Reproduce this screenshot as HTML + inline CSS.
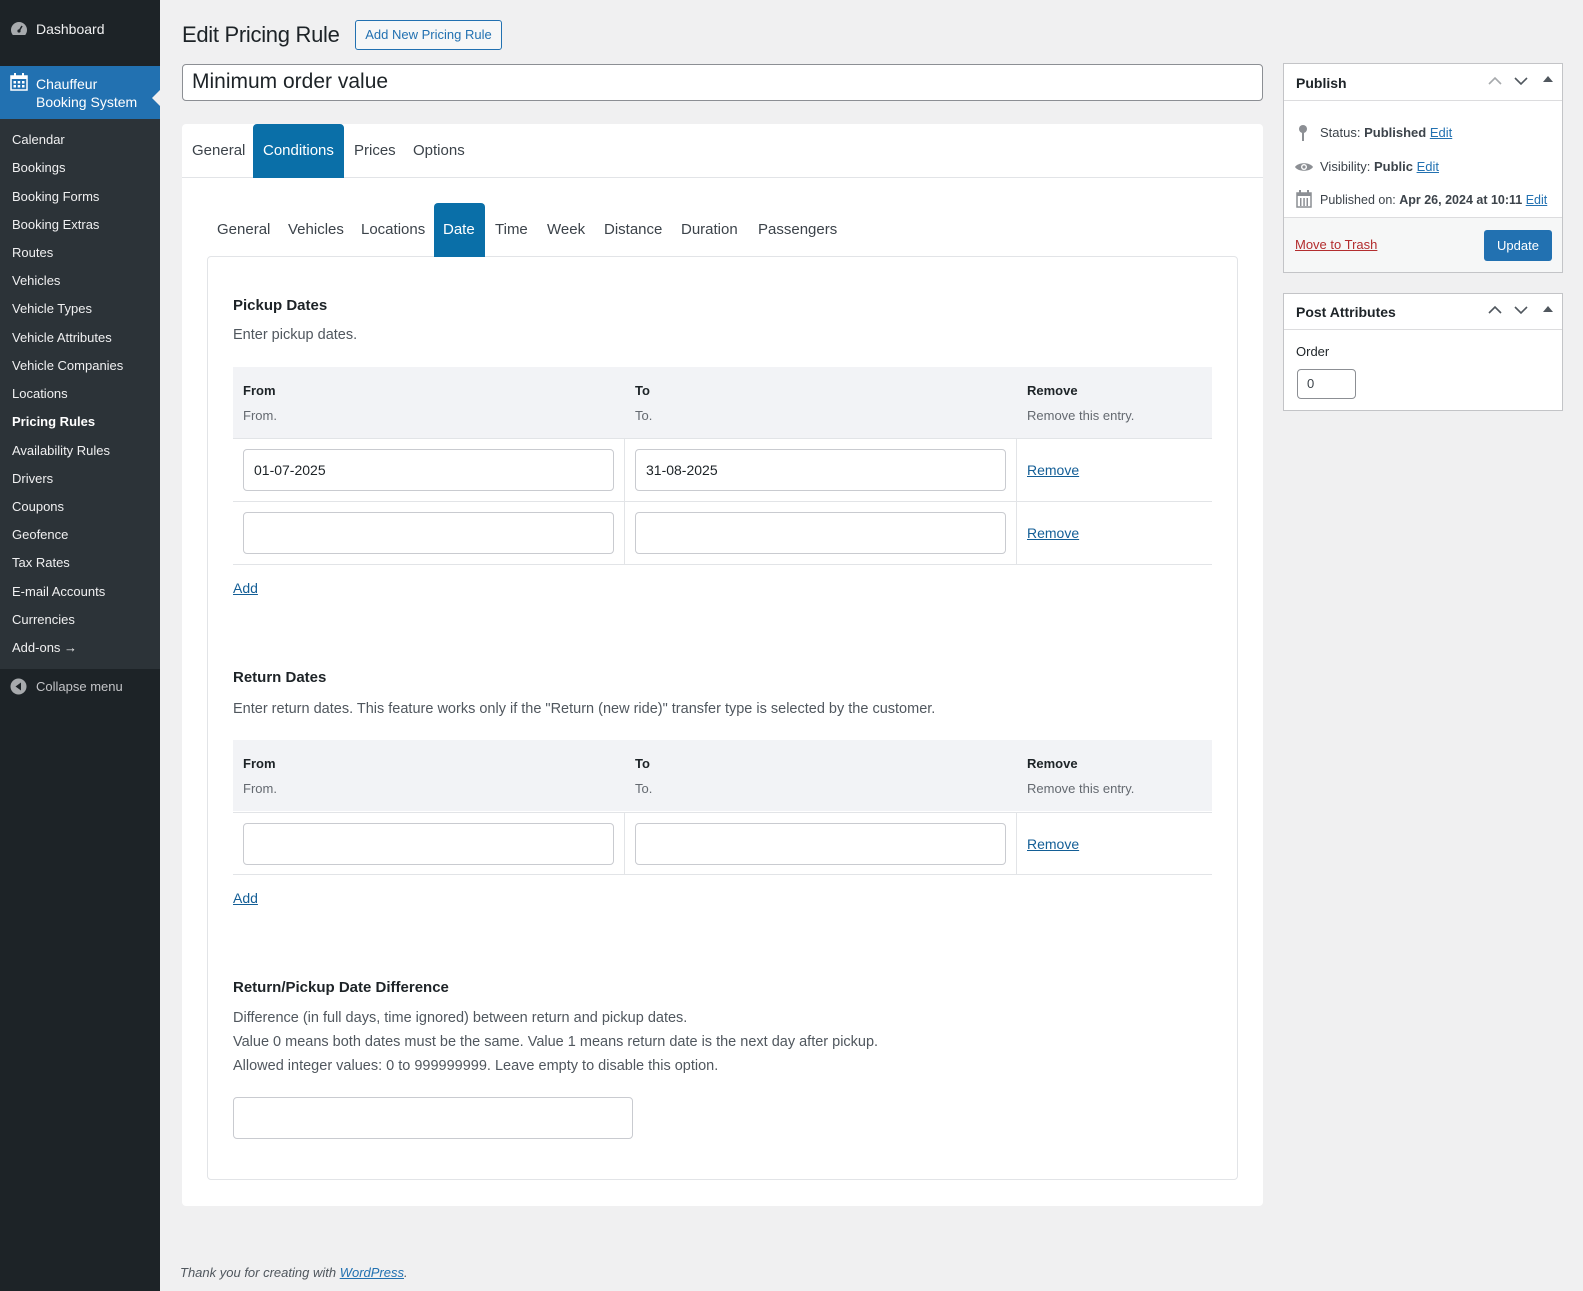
<!DOCTYPE html>
<html><head><meta charset="utf-8"><style>
*{box-sizing:border-box;margin:0;padding:0}
body{width:1583px;height:1291px;background:#f0f0f1;font-family:"Liberation Sans",sans-serif;color:#3c434a;font-size:14px;position:relative;overflow:hidden}
.abs{position:absolute}
#side{left:0;top:0;width:160px;height:1291px;background:#1d2327}
#sub{left:0;top:119px;width:160px;height:550px;background:#2c3338}
.mi{position:absolute;left:12px;font-size:13px;color:#f0f0f1;white-space:nowrap}
a{color:#2271b1}
input.t{position:absolute;background:#fff;border:1px solid #c9cbd0;border-radius:4px;height:42px;font-family:inherit;font-size:14px;padding-left:10px;color:#1d2327}
.tab{position:absolute;font-size:15px;color:#3c434a;white-space:nowrap}
.h3{position:absolute;left:233px;font-weight:bold;font-size:15px;color:#1d2327}
.d{position:absolute;left:233px;font-size:14.5px;color:#50575e;white-space:nowrap}
.th{position:absolute;background:#f2f3f6;left:233px;width:979px;height:71px}
.tl{position:absolute;font-weight:bold;font-size:13px;color:#1d2327}
.ts{position:absolute;font-size:13px;color:#646970}
.hr{position:absolute;left:233px;width:979px;height:1px;background:#e2e4e7}
.vr{position:absolute;width:1px;background:#e2e4e7}
.lnk{position:absolute;font-size:14px;color:#135e96;text-decoration:underline}
.pb{position:absolute;left:1283px;width:280px;background:#fff;border:1px solid #c3c4c7}
</style></head><body>
<div id="side" class="abs"></div>
<div id="sub" class="abs"></div>
<div class="abs" style="left:0;top:66px;width:160px;height:53px;background:#2271b1"></div>
<div class="abs" style="left:152px;top:90px;width:0;height:0;border-top:8px solid transparent;border-bottom:8px solid transparent;border-right:8px solid #f0f0f1"></div>
<svg class="abs" style="left:10px;top:21px" width="18" height="16" viewBox="0 0 18 16"><path d="M9 1a8 8 0 0 0-8 8c0 2 .7 3.6 1.8 5h12.4A8 8 0 0 0 17 9a8 8 0 0 0-8-8z" fill="#a7aaad"/><circle cx="9" cy="10" r="1.6" fill="#1d2327"/><path d="M9 10L12 5" stroke="#1d2327" stroke-width="1.5"/></svg>
<div class="mi" style="left:36px;top:21px;font-size:14px">Dashboard</div>
<svg class="abs" style="left:10px;top:73px" width="18" height="18" viewBox="0 0 18 18"><rect x="1" y="3" width="16" height="14" fill="none" stroke="#fff" stroke-width="1.5"/><rect x="1" y="3" width="16" height="3" fill="#fff"/><rect x="4" y="0" width="2" height="4" fill="#fff"/><rect x="12" y="0" width="2" height="4" fill="#fff"/><g fill="#fff"><rect x="3.5" y="8" width="2.5" height="2.5"/><rect x="7.7" y="8" width="2.5" height="2.5"/><rect x="12" y="8" width="2.5" height="2.5"/><rect x="3.5" y="12" width="2.5" height="2.5"/><rect x="7.7" y="12" width="2.5" height="2.5"/><rect x="12" y="12" width="2.5" height="2.5"/></g></svg>
<div class="mi" style="left:36px;top:75px;font-size:14px;color:#fff;line-height:18px">Chauffeur<br>Booking System</div>
<div class="mi" style="top:132px">Calendar</div>
<div class="mi" style="top:160px">Bookings</div>
<div class="mi" style="top:189px">Booking Forms</div>
<div class="mi" style="top:217px">Booking Extras</div>
<div class="mi" style="top:245px">Routes</div>
<div class="mi" style="top:273px">Vehicles</div>
<div class="mi" style="top:301px">Vehicle Types</div>
<div class="mi" style="top:330px">Vehicle Attributes</div>
<div class="mi" style="top:358px">Vehicle Companies</div>
<div class="mi" style="top:386px">Locations</div>
<div class="mi" style="top:414px;font-weight:bold;color:#fff">Pricing Rules</div>
<div class="mi" style="top:443px">Availability Rules</div>
<div class="mi" style="top:471px">Drivers</div>
<div class="mi" style="top:499px">Coupons</div>
<div class="mi" style="top:527px">Geofence</div>
<div class="mi" style="top:555px">Tax Rates</div>
<div class="mi" style="top:584px">E-mail Accounts</div>
<div class="mi" style="top:612px">Currencies</div>
<div class="mi" style="top:640px">Add-ons →</div>
<svg class="abs" style="left:10px;top:678px" width="17" height="17"><circle cx="8.5" cy="8.5" r="8" fill="#a7aaad"/><path d="M11 4.5L5.5 8.5 11 12.5z" fill="#1d2327"/></svg>
<div class="mi" style="left:36px;top:679px;color:#c3c4c7">Collapse menu</div>

<div class="abs" style="left:182px;top:22px;font-size:22px;color:#1d2327;letter-spacing:-0.3px">Edit Pricing Rule</div>
<div class="abs" style="left:355px;top:20px;width:147px;height:30px;border:1px solid #2271b1;border-radius:3px;background:#f6f7f7;color:#2271b1;font-size:13px;line-height:28px;text-align:center">Add New Pricing Rule</div>
<div class="abs" style="left:182px;top:64px;width:1081px;height:37px;background:#fff;border:1px solid #8c8f94;border-radius:4px;font-size:21px;color:#1d2327;padding:5px 0 0 9px">Minimum order value</div>

<div class="abs" style="left:182px;top:124px;width:1081px;height:1082px;background:#fff;border-radius:4px"></div>
<div class="abs" style="left:182px;top:177px;width:1081px;height:1px;background:#e2e4e7"></div>
<div class="abs" style="left:253px;top:124px;width:91px;height:54px;background:#0a6fa8;border-radius:4px 4px 0 0"></div>
<div class="tab" style="left:192px;top:142px">General</div>
<div class="tab" style="left:263px;top:142px;color:#fff">Conditions</div>
<div class="tab" style="left:354px;top:142px">Prices</div>
<div class="tab" style="left:413px;top:142px">Options</div>

<div class="abs" style="left:207px;top:256px;width:1031px;height:924px;border:1px solid #e2e4e7;border-radius:4px"></div>
<div class="abs" style="left:434px;top:203px;width:51px;height:54px;background:#0a6fa8;border-radius:4px 4px 0 0"></div>
<div class="tab" style="left:217px;top:221px">General</div>
<div class="tab" style="left:288px;top:221px">Vehicles</div>
<div class="tab" style="left:361px;top:221px">Locations</div>
<div class="tab" style="left:443px;top:221px;color:#fff">Date</div>
<div class="tab" style="left:495px;top:221px">Time</div>
<div class="tab" style="left:547px;top:221px">Week</div>
<div class="tab" style="left:604px;top:221px">Distance</div>
<div class="tab" style="left:681px;top:221px">Duration</div>
<div class="tab" style="left:758px;top:221px">Passengers</div>

<div class="h3" style="top:297px">Pickup Dates</div>
<div class="d" style="top:327px">Enter pickup dates.</div>
<div class="th" style="top:367px"></div>
<div class="tl" style="left:243px;top:383px">From</div><div class="ts" style="left:243px;top:408px">From.</div>
<div class="tl" style="left:635px;top:383px">To</div><div class="ts" style="left:635px;top:408px">To.</div>
<div class="tl" style="left:1027px;top:383px">Remove</div><div class="ts" style="left:1027px;top:408px">Remove this entry.</div>
<div class="hr" style="top:438px"></div><div class="hr" style="top:501px"></div><div class="hr" style="top:564px"></div>
<div class="vr" style="left:624px;top:438px;height:126px"></div><div class="vr" style="left:1016px;top:438px;height:126px"></div>
<input class="t" style="left:243px;top:449px;width:371px" value="01-07-2025">
<input class="t" style="left:635px;top:449px;width:371px" value="31-08-2025">
<div class="lnk" style="left:1027px;top:462px">Remove</div>
<input class="t" style="left:243px;top:512px;width:371px">
<input class="t" style="left:635px;top:512px;width:371px">
<div class="lnk" style="left:1027px;top:525px">Remove</div>
<div class="lnk" style="left:233px;top:580px">Add</div>

<div class="h3" style="top:669px">Return Dates</div>
<div class="d" style="top:701px">Enter return dates. This feature works only if the "Return (new ride)" transfer type is selected by the customer.</div>
<div class="th" style="top:740px"></div>
<div class="tl" style="left:243px;top:756px">From</div><div class="ts" style="left:243px;top:781px">From.</div>
<div class="tl" style="left:635px;top:756px">To</div><div class="ts" style="left:635px;top:781px">To.</div>
<div class="tl" style="left:1027px;top:756px">Remove</div><div class="ts" style="left:1027px;top:781px">Remove this entry.</div>
<div class="hr" style="top:812px"></div><div class="hr" style="top:874px"></div>
<div class="vr" style="left:624px;top:812px;height:62px"></div><div class="vr" style="left:1016px;top:812px;height:62px"></div>
<input class="t" style="left:243px;top:823px;width:371px">
<input class="t" style="left:635px;top:823px;width:371px">
<div class="lnk" style="left:1027px;top:836px">Remove</div>
<div class="lnk" style="left:233px;top:890px">Add</div>

<div class="h3" style="top:979px">Return/Pickup Date Difference</div>
<div class="d" style="top:1010px">Difference (in full days, time ignored) between return and pickup dates.</div>
<div class="d" style="top:1034px">Value 0 means both dates must be the same. Value 1 means return date is the next day after pickup.</div>
<div class="d" style="top:1058px">Allowed integer values: 0 to 999999999. Leave empty to disable this option.</div>
<input class="t" style="left:233px;top:1097px;width:400px">

<div class="abs" style="left:180px;top:1265px;font-size:13px;font-style:italic;color:#50575e">Thank you for creating with <a href="#">WordPress</a>.</div>

<div class="pb" style="top:63px;height:210px;overflow:hidden">
 <div class="abs" style="left:12px;top:11px;font-size:14px;font-weight:bold;color:#1d2327">Publish</div>
 <svg class="abs" style="left:203px;top:12px" width="16" height="10"><path d="M2 8L8 2 14 8" fill="none" stroke="#a7aaad" stroke-width="1.6"/></svg>
 <svg class="abs" style="left:229px;top:12px" width="16" height="10"><path d="M2 2L8 8 14 2" fill="none" stroke="#50575e" stroke-width="1.6"/></svg>
 <div class="abs" style="left:259px;top:12px;width:0;height:0;border-left:5px solid transparent;border-right:5px solid transparent;border-bottom:6px solid #50575e"></div>
 <div class="abs" style="left:0;top:36px;right:0;height:1px;background:#dcdcde"></div>
 <svg class="abs" style="left:13px;top:60px" width="12" height="18"><circle cx="6" cy="5" r="4" fill="#8c8f94"/><rect x="5" y="7" width="2" height="10" fill="#8c8f94"/></svg>
 <div class="abs" style="left:36px;top:61px;font-size:13px;color:#3c434a">Status: <b>Published</b> <a href="#">Edit</a></div>
 <svg class="abs" style="left:10px;top:96px" width="20" height="14"><path d="M1 7C4 2 16 2 19 7 16 12 4 12 1 7z" fill="#8c8f94"/><circle cx="10" cy="7" r="3" fill="#fff"/><circle cx="10" cy="7" r="1.6" fill="#8c8f94"/></svg>
 <div class="abs" style="left:36px;top:95px;font-size:13px;color:#3c434a">Visibility: <b>Public</b> <a href="#">Edit</a></div>
 <svg class="abs" style="left:12px;top:126px" width="16" height="18"><rect x="1" y="3" width="14" height="14" fill="none" stroke="#8c8f94" stroke-width="1.5"/><rect x="1" y="3" width="14" height="3" fill="#8c8f94"/><rect x="3" y="0" width="2" height="4" fill="#8c8f94"/><rect x="11" y="0" width="2" height="4" fill="#8c8f94"/><g fill="#8c8f94"><rect x="4" y="8" width="1.5" height="8"/><rect x="7.3" y="8" width="1.5" height="8"/><rect x="10.5" y="8" width="1.5" height="8"/></g></svg>
 <div class="abs" style="left:36px;top:129px;font-size:12.5px;color:#3c434a;white-space:nowrap">Published on: <b>Apr 26, 2024 at 10:11</b> <a href="#">Edit</a></div>
 <div class="abs" style="left:0;right:0;bottom:0;height:55px;background:#f6f7f7;border-top:1px solid #dcdcde"></div>
 <a class="abs" href="#" style="left:11px;top:173px;font-size:13px;color:#b32d2e">Move to Trash</a>
 <div class="abs" style="left:200px;top:166px;width:68px;height:31px;background:#2271b1;border-radius:3px;color:#fff;font-size:13px;line-height:31px;text-align:center">Update</div>
</div>
<div class="pb" style="top:293px;height:118px">
 <div class="abs" style="left:12px;top:10px;font-size:14px;font-weight:bold;color:#1d2327">Post Attributes</div>
 <svg class="abs" style="left:203px;top:11px" width="16" height="10"><path d="M2 8L8 2 14 8" fill="none" stroke="#50575e" stroke-width="1.6"/></svg>
 <svg class="abs" style="left:229px;top:11px" width="16" height="10"><path d="M2 2L8 8 14 2" fill="none" stroke="#50575e" stroke-width="1.6"/></svg>
 <div class="abs" style="left:259px;top:12px;width:0;height:0;border-left:5px solid transparent;border-right:5px solid transparent;border-bottom:6px solid #50575e"></div>
 <div class="abs" style="left:0;top:35px;right:0;height:1px;background:#dcdcde"></div>
 <div class="abs" style="left:12px;top:50px;font-size:13px;color:#1d2327">Order</div>
 <div class="abs" style="left:13px;top:75px;width:59px;height:30px;border:1px solid #8c8f94;border-radius:4px;font-size:13px;padding:6px 0 0 9px">0</div>
</div>
</body></html>
